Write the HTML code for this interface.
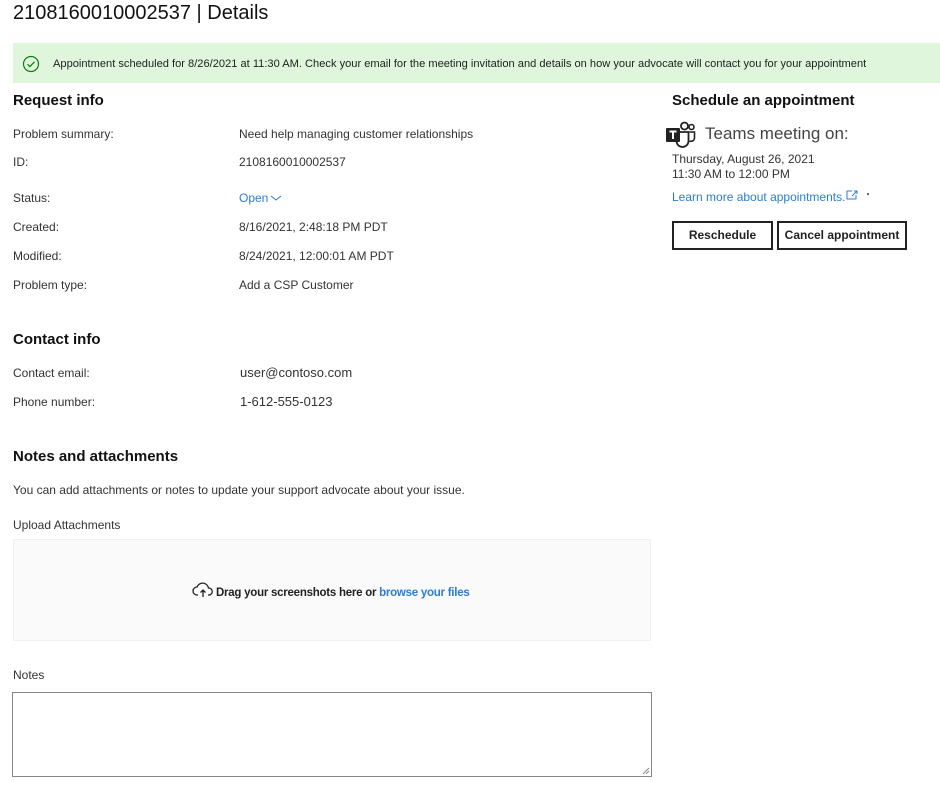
<!DOCTYPE html>
<html><head><meta charset="utf-8">
<style>
*{margin:0;padding:0;box-sizing:border-box}
body{width:940px;height:790px;background:#fff;font-family:"Liberation Sans",sans-serif;color:#222;position:relative;overflow:hidden}
.a{position:absolute;white-space:nowrap}
.s{font-size:12px}
.h{font-size:15px;font-weight:bold;color:#111}
.lbl{font-size:12px;color:#333}
.val{font-size:12px;color:#333}
</style></head><body>
<div class="a" style="left:13px;top:2px;font-size:20px;color:#111">2108160010002537 | Details</div>
<div class="a" style="left:13px;top:43px;width:927px;height:40px;background:#dff6dd"></div>
<svg class="a" style="left:22px;top:55px" width="18" height="18" viewBox="0 0 18 18"><circle cx="9" cy="9" r="7.5" fill="none" stroke="#107c10" stroke-width="1.2"/><path d="M5.5 9.2l2.4 2.4 4.6-4.8" fill="none" stroke="#107c10" stroke-width="1.2"/></svg>
<div class="a" style="left:53px;top:58px;font-size:11.1px;color:#222">Appointment scheduled for 8/26/2021 at 11:30 AM. Check your email for the meeting invitation and details on how your advocate will contact you for your appointment</div>

<div class="a h" style="left:13px;top:92px">Request info</div>
<div class="a lbl" style="left:13px;top:127px">Problem summary:</div><div class="a val" style="left:239px;top:127px">Need help managing customer relationships</div>
<div class="a lbl" style="left:13px;top:155px">ID:</div><div class="a val" style="left:239px;top:155px">2108160010002537</div>
<div class="a lbl" style="left:13px;top:191px">Status:</div><div class="a val" style="left:239px;top:191px;color:#2b7cd3">Open<svg width="12" height="8" viewBox="0 0 12 8" style="margin-left:2px"><path d="M1 2l5 4 5-4" fill="none" stroke="#2b7cd3"/></svg></div>
<div class="a lbl" style="left:13px;top:220px">Created:</div><div class="a val" style="left:239px;top:220px">8/16/2021, 2:48:18 PM PDT</div>
<div class="a lbl" style="left:13px;top:249px">Modified:</div><div class="a val" style="left:239px;top:249px">8/24/2021, 12:00:01 AM PDT</div>
<div class="a lbl" style="left:13px;top:278px">Problem type:</div><div class="a val" style="left:239px;top:278px">Add a CSP Customer</div>

<div class="a h" style="left:13px;top:331px">Contact info</div>
<div class="a lbl" style="left:13px;top:366px">Contact email:</div><div class="a val" style="left:240px;top:365px;font-size:13px">user@contoso.com</div>
<div class="a lbl" style="left:13px;top:395px">Phone number:</div><div class="a val" style="left:240px;top:394px;font-size:13px">1-612-555-0123</div>

<div class="a h" style="left:13px;top:448px">Notes and attachments</div>
<div class="a lbl" style="left:13px;top:483px">You can add attachments or notes to update your support advocate about your issue.</div>
<div class="a lbl" style="left:13px;top:518px">Upload Attachments</div>
<div class="a" style="left:13px;top:539px;width:638px;height:102px;background:#fafafa;border:1px solid #f0f0f0"></div>
<svg class="a" style="left:192px;top:582px" width="22" height="16" viewBox="0 0 22 16"><path d="M6 13H5a4 4 0 0 1 0-8 6 6 0 0 1 11.5 1A3.5 3.5 0 0 1 17 13h-1" fill="none" stroke="#222" stroke-width="1.3"/><path d="M11 15V8M8.5 10.5L11 8l2.5 2.5" fill="none" stroke="#222" stroke-width="1.3"/></svg>
<div class="a" style="left:216px;top:587px;font-size:11.5px;font-weight:bold;color:#222;letter-spacing:-0.25px">Drag your screenshots here or <span style="color:#2b7cd3">browse your files</span></div>
<div class="a lbl" style="left:13px;top:668px">Notes</div>
<div class="a" style="left:12px;top:692px;width:640px;height:85px;border:1px solid #888"></div>
<svg class="a" style="left:642px;top:767px" width="8" height="8"><path d="M1 7L7 1M4 7L7 4" stroke="#888"/></svg>

<div class="a h" style="left:672px;top:92px">Schedule an appointment</div>
<svg class="a" style="left:666px;top:121px" width="30" height="28" viewBox="0 0 30 28"><circle cx="18.5" cy="5" r="3.5" fill="none" stroke="#222" stroke-width="1.8"/><circle cx="25.5" cy="6" r="2.5" fill="none" stroke="#222" stroke-width="1.6"/><path d="M11 11h11.5v9a6 6 0 0 1-12 0" fill="none" stroke="#222" stroke-width="1.8"/><path d="M23.5 11h5v6a3.5 3.5 0 0 1-5 3" fill="none" stroke="#222" stroke-width="1.6"/><rect x="0" y="7" width="14" height="14" rx="1" fill="#222"/><path d="M3.5 10.5h7M7 10.5v7.5" stroke="#fff" stroke-width="2"/></svg>
<div class="a" style="left:705px;top:124px;font-size:17px;color:#444">Teams meeting on:</div>
<div class="a s" style="left:672px;top:152px;color:#333">Thursday, August 26, 2021</div>
<div class="a s" style="left:672px;top:167px;color:#333">11:30 AM to 12:00 PM</div>
<div class="a s" style="left:672px;top:190px;color:#2b7cd3">Learn more about appointments.</div>
<svg class="a" style="left:846px;top:190px" width="12" height="10" viewBox="0 0 12 10"><path d="M6 1H1v8h9V5M8 1h3v3M11 1L6 6" fill="none" stroke="#2b7cd3"/></svg>
<div class="a" style="left:867px;top:193px;width:2px;height:2px;background:#666"></div>
<div class="a" style="left:672px;top:221px;width:101px;height:29px;border:2px solid #222;font-size:12px;font-weight:bold;text-align:center;line-height:25px">Reschedule</div>
<div class="a" style="left:777px;top:221px;width:130px;height:29px;border:2px solid #222;font-size:12px;font-weight:bold;text-align:center;line-height:25px">Cancel appointment</div>
</body></html>
